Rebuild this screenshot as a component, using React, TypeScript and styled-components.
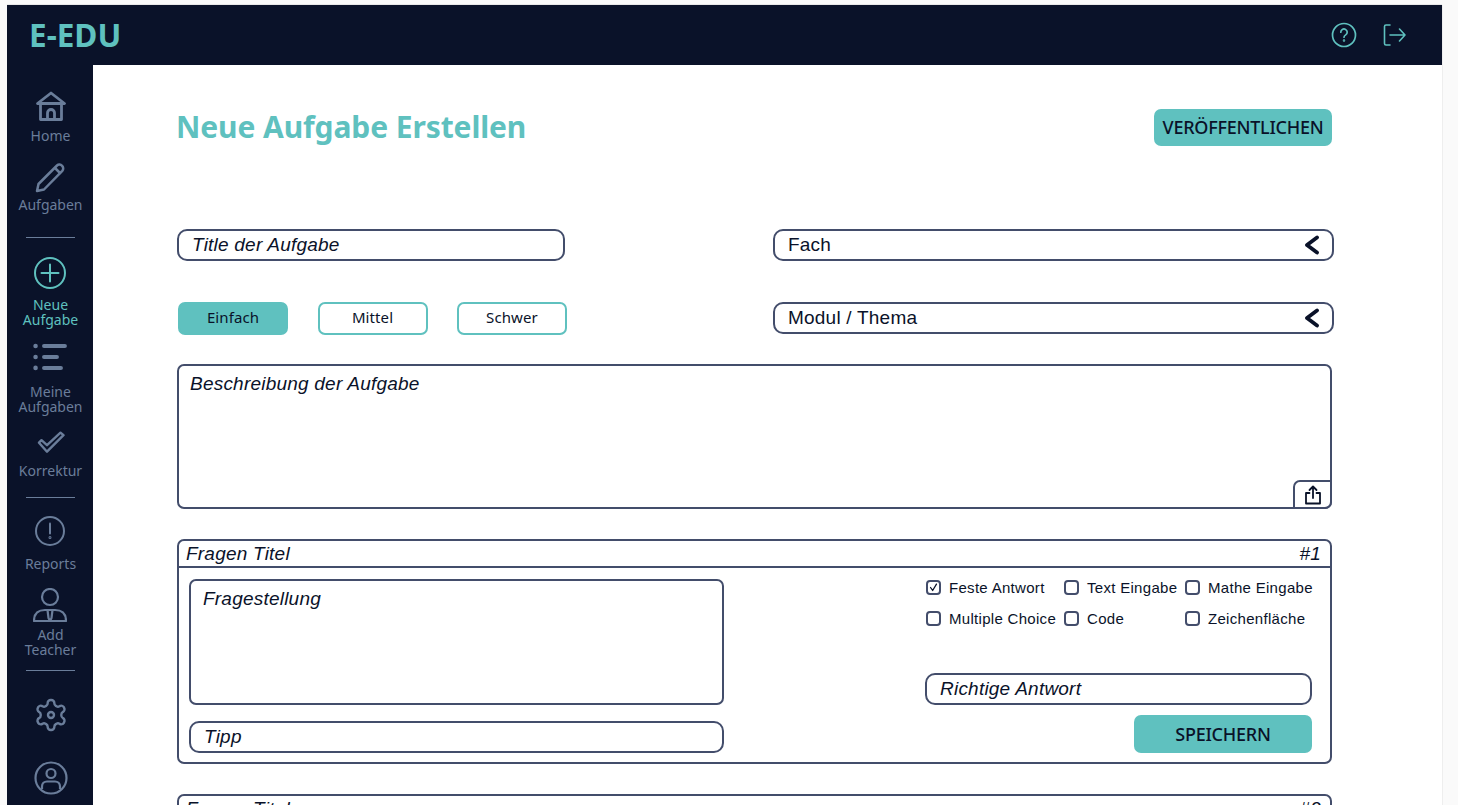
import React from 'react';
import styled, { createGlobalStyle } from 'styled-components';

const NAVY = '#0a1229';
const TEAL = '#5fc1bf';
const MUTED = '#6a7d9a';
const LINE = '#434d6b';

const GlobalStyle = createGlobalStyle`
    html, body {
        margin: 0;
        height: 805px;
        overflow: hidden;
        background: #fafafa;
    }
    body {
        font-family: "Noto Sans", sans-serif;
    }
`;

type IconProps = { size: number; stroke?: string };

const HomeIcon = ({ size, stroke = MUTED }: IconProps) => (
    <svg width={size} height={size} viewBox="0 0 30 30" fill="none" stroke={stroke} strokeWidth="2.8" strokeLinejoin="round" strokeLinecap="round">
        <path d="M1.500 12.500 15 2l13.500 10.500z" />
        <path d="M4.500 13v15.500h21V13" />
        <path d="M11.500 28v-6a3.500 3.500 0 0 1 7 0v6" />
    </svg>
);

const PencilIcon = ({ size, stroke = MUTED }: IconProps) => (
    <svg width={size} height={size} viewBox="0 0 30 30" fill="none" stroke={stroke} strokeWidth="2.5" strokeLinejoin="round" strokeLinecap="round">
        <path d="M2 28l1.500-7L22 2.500a3.500 3.500 0 0 1 5 .3 3.500 3.500 0 0 1 .3 5L9 26.500z" />
        <path d="M20 5l5 5" />
    </svg>
);

const PlusCircleIcon = ({ size, stroke = TEAL }: IconProps) => (
    <svg width={size} height={size} viewBox="0 0 32 32" fill="none" stroke={stroke} strokeWidth="2" strokeLinecap="round">
        <circle cx="16" cy="16" r="15" />
        <path d="M16 7.500v17M7.500 16h17" />
    </svg>
);

const ListIcon = ({ size, stroke = MUTED }: IconProps) => (
    <svg width={size} height={size * 0.82} viewBox="0 0 34 28" fill="none" stroke={stroke} strokeLinecap="round">
        <circle cx="2.500" cy="3" r="2.300" fill={stroke} stroke="none" />
        <circle cx="2.500" cy="14" r="2.300" fill={stroke} stroke="none" />
        <circle cx="2.500" cy="25" r="2.300" fill={stroke} stroke="none" />
        <path d="M11 3h21M11 14h13M11 25h17" strokeWidth="4" />
    </svg>
);

const CheckIcon = ({ size, stroke = MUTED }: IconProps) => (
    <svg width={size} height={size * 0.8} viewBox="0 0 28 22" fill="none" stroke={stroke} strokeWidth="2.400" strokeLinejoin="round">
        <path d="M2 11.500 4.500 9l5.500 5L23.500 1.500 26.500 4 10 20.500z" />
    </svg>
);

const AlertIcon = ({ size, stroke = MUTED }: IconProps) => (
    <svg width={size} height={size} viewBox="0 0 30 30" fill="none" stroke={stroke} strokeWidth="2" strokeLinecap="round">
        <circle cx="15" cy="15" r="14" />
        <path d="M15 7.500v10" />
        <circle cx="15" cy="21.500" r="0.500" />
    </svg>
);

const TeacherIcon = ({ size, stroke = MUTED }: IconProps) => (
    <svg width={size} height={size} viewBox="0 0 34 34" fill="none" stroke={stroke} strokeWidth="2.200" strokeLinejoin="round">
        <circle cx="17" cy="9" r="8" />
        <path d="M1 33c0-7 4-11 11-11h10c7 0 11 4 11 11z" />
        <path d="M14.500 22l1 8 1.500 3 1.500-3 1-8" />
    </svg>
);

const GearIcon = ({ size, stroke = MUTED }: IconProps) => (
    <svg width={size} height={size} viewBox="0 0 24 24" fill="none" stroke={stroke} strokeWidth="1.600" strokeLinejoin="round" strokeLinecap="round">
        <path d="M12.220 2h-.44a2 2 0 0 0-2 2v.18a2 2 0 0 1-1 1.730l-.43.25a2 2 0 0 1-2 0l-.15-.08a2 2 0 0 0-2.730.73l-.22.38a2 2 0 0 0 .73 2.730l.15.1a2 2 0 0 1 1 1.720v.51a2 2 0 0 1-1 1.740l-.15.09a2 2 0 0 0-.73 2.730l.22.38a2 2 0 0 0 2.730.73l.15-.08a2 2 0 0 1 2 0l.43.25a2 2 0 0 1 1 1.730V20a2 2 0 0 0 2 2h.44a2 2 0 0 0 2-2v-.18a2 2 0 0 1 1-1.730l.43-.25a2 2 0 0 1 2 0l.15.08a2 2 0 0 0 2.730-.73l.22-.39a2 2 0 0 0-.73-2.730l-.15-.08a2 2 0 0 1-1-1.740v-.5a2 2 0 0 1 1-1.740l.15-.09a2 2 0 0 0 .73-2.730l-.22-.38a2 2 0 0 0-2.730-.73l-.15.08a2 2 0 0 1-2 0l-.43-.25a2 2 0 0 1-1-1.730V4a2 2 0 0 0-2-2z" />
        <circle cx="12" cy="12" r="2" />
    </svg>
);

const UserCircleIcon = ({ size, stroke = MUTED }: IconProps) => (
    <svg width={size} height={size} viewBox="0 0 34 34" fill="none" stroke={stroke} strokeWidth="2.200">
        <circle cx="17" cy="17" r="15.500" />
        <circle cx="17" cy="12.500" r="4.500" />
        <path d="M8 28v-2.500c0-3 2.200-5 5-5h8c2.800 0 5 2 5 5V28" />
    </svg>
);

const HelpIcon = () => (
    <svg width="26" height="26" viewBox="0 0 26 26" fill="none" stroke={TEAL} strokeWidth="1.700" strokeLinecap="round">
        <circle cx="13" cy="13" r="11.500" />
        <path d="M9.800 10.200a3.200 3.200 0 1 1 4.900 2.700c-1 .6-1.700 1.200-1.700 2.300" />
        <circle cx="13" cy="18.600" r="0.400" />
    </svg>
);

const LogoutIcon = () => (
    <svg width="23" height="24" viewBox="0 0 23 24" fill="none" stroke={TEAL} strokeWidth="1.600" strokeLinecap="round" strokeLinejoin="round">
        <path d="M7 2H3a1.500 1.500 0 0 0-1.500 1.500v17A1.500 1.500 0 0 0 3 22h4" />
        <path d="M7 12h15M16.500 6l5.500 6-5.500 6" />
    </svg>
);

const ChevronIcon = () => (
    <svg width="16" height="20" viewBox="0 0 16 20" fill="none" stroke={NAVY} strokeWidth="3.800" strokeLinecap="round" strokeLinejoin="round">
        <path d="M13 2.500 3 10l10 7.500" />
    </svg>
);

const ShareIcon = () => (
    <svg width="18" height="20" viewBox="0 0 18 20" fill="none" stroke={NAVY} strokeWidth="1.800" strokeLinecap="round" strokeLinejoin="round">
        <path d="M5.500 8H2v10.500h14V8h-3.500" />
        <path d="M9 13V1.500M5.500 5 9 1.500 12.500 5" />
    </svg>
);

const CheckMark = () => (
    <svg width="13" height="13" viewBox="0 0 13 13" fill="none" stroke={NAVY} strokeWidth="1.500" strokeLinecap="round" strokeLinejoin="round">
        <path d="M3 6.500 5.500 10 10 2.500" />
    </svg>
);

const navTop = [
    { icon: <HomeIcon size={30} />, label: ['Home'], mt: 26, gap: 7 },
    { icon: <PencilIcon size={30} />, label: ['Aufgaben'], mt: 20, gap: 4 },
];
const navMid = [
    { icon: <PlusCircleIcon size={32} />, label: ['Neue', 'Aufgabe'], mt: 19, gap: 8, active: true },
    { icon: <ListIcon size={34} />, label: ['Meine', 'Aufgaben'], mt: 16, gap: 13 },
    { icon: <CheckIcon size={28} />, label: ['Korrektur'], mt: 17, gap: 10 },
];
const navLow = [
    { icon: <AlertIcon size={30} />, label: ['Reports'], mt: 18, gap: 10 },
    { icon: <TeacherIcon size={34} />, label: ['Add', 'Teacher'], mt: 17, gap: 5 },
];

const renderNav = (items: typeof navMid) =>
    items.map((item) => (
        <NavItem key={item.label[0]} $mt={item.mt} $gap={item.gap} $active={item.active}>
            {item.icon}
            <NavLabel>
                {item.label.map((line) => (
                    <span key={line}>{line}</span>
                ))}
            </NavLabel>
        </NavItem>
    ));

const QuestionCard = ({ number, checks }: { number: number; checks: { label: string; on?: boolean }[] }) => (
    <Card>
        <CardHeader>
            <span>Fragen Titel</span>
            <span>#{number}</span>
        </CardHeader>
        <CardBody>
            <CardLeft>
                <QuestionBox>Fragestellung</QuestionBox>
                <Field $pad={13}>Tipp</Field>
            </CardLeft>
            <CardRight>
                <CheckGrid>
                    {checks.map((check) => (
                        <CheckItem key={check.label}>
                            <CheckBox>{check.on && <CheckMark />}</CheckBox>
                            {check.label}
                        </CheckItem>
                    ))}
                </CheckGrid>
                <Field $pad={13}>Richtige Antwort</Field>
                <SaveButton>SPEICHERN</SaveButton>
            </CardRight>
        </CardBody>
    </Card>
);

const answerTypes = [
    { label: 'Feste Antwort', on: true },
    { label: 'Text Eingabe' },
    { label: 'Mathe Eingabe' },
    { label: 'Multiple Choice' },
    { label: 'Code' },
    { label: 'Zeichenfläche' },
];

export default function App() {
    return (
        <>
            <GlobalStyle />
            <Shell>
                <Header>
                    <Logo>E-EDU</Logo>
                    <HeaderIcons>
                        <HelpIcon />
                        <LogoutIcon />
                    </HeaderIcons>
                </Header>
                <Body>
                    <Sidebar>
                        {renderNav(navTop)}
                        <NavDivider $mt={25} />
                        {renderNav(navMid)}
                        <NavDivider $mt={19} />
                        {renderNav(navLow)}
                        <NavDivider $mt={13} />
                        <NavIcon $mt={26}><GearIcon size={36} /></NavIcon>
                        <NavIcon $mt={28}><UserCircleIcon size={34} /></NavIcon>
                    </Sidebar>
                    <Main>
                        <TitleRow>
                            <Title>Neue Aufgabe Erstellen</Title>
                            <PublishButton>VERÖFFENTLICHEN</PublishButton>
                        </TitleRow>
                        <FormGrid>
                            <TitleField $pad={13}>Title der Aufgabe</TitleField>
                            <SelectField>
                                Fach
                                <ChevronIcon />
                            </SelectField>
                            <LevelRow>
                                <LevelButton $active>Einfach</LevelButton>
                                <LevelButton>Mittel</LevelButton>
                                <LevelButton>Schwer</LevelButton>
                            </LevelRow>
                            <SelectField>
                                Modul / Thema
                                <ChevronIcon />
                            </SelectField>
                        </FormGrid>
                        <Description>
                            Beschreibung der Aufgabe
                            <UploadTab>
                                <ShareIcon />
                            </UploadTab>
                        </Description>
                        <QuestionCard number={1} checks={answerTypes} />
                        <QuestionCard number={2} checks={answerTypes} />
                    </Main>
                </Body>
            </Shell>
        </>
    );
}

const Shell = styled.div`
    width: 1435px;
    height: 800px;
    margin: 5px 0 0 7px;
    overflow: hidden;
    display: flex;
    flex-direction: column;
    box-shadow: 0 -1px 0 #e8e8e8, 1px 0 0 #eeeeee;
`;

const Header = styled.header`
    flex: none;
    height: 60px;
    display: flex;
    align-items: center;
    justify-content: space-between;
    padding: 0 36px 0 22px;
    background: ${NAVY};
`;

const Logo = styled.div`
    padding-bottom: 2px;
    font-size: 31.500px;
    font-weight: 700;
    color: ${TEAL};
`;

const HeaderIcons = styled.div`
    display: flex;
    align-items: center;
    gap: 26px;
`;

const Body = styled.div`
    flex: 1;
    display: flex;
    min-height: 0;
`;

const Sidebar = styled.nav`
    box-sizing: border-box;
    flex: none;
    width: 86px;
    padding-left: 1px;
    display: flex;
    flex-direction: column;
    align-items: center;
    background: ${NAVY};
`;

const NavItem = styled.div<{ $mt: number; $gap: number; $active?: boolean }>`
    display: flex;
    flex-direction: column;
    align-items: center;
    margin-top: ${({ $mt }) => $mt}px;
    gap: ${({ $gap }) => $gap}px;
    color: ${({ $active }) => ($active ? TEAL : MUTED)};
`;

const NavLabel = styled.div`
    display: flex;
    flex-direction: column;
    align-items: center;
    font-size: 14px;
    line-height: 15px;
`;

const NavDivider = styled.div<{ $mt: number }>`
    flex: none;
    width: 49px;
    height: 1px;
    margin-top: ${({ $mt }) => $mt}px;
    background: ${MUTED};
`;

const NavIcon = styled.div<{ $mt: number }>`
    display: flex;
    margin-top: ${({ $mt }) => $mt}px;
`;

const Main = styled.main`
    flex: 1;
    min-width: 0;
    padding: 44px 110px 0 84px;
    background: #fff;
`;

const TitleRow = styled.div`
    display: flex;
    align-items: center;
    justify-content: space-between;
    height: 37px;
`;

const Title = styled.h1`
    margin: 0 0 2px -1px;
    font-size: 30px;
    font-weight: 700;
    letter-spacing: -0.1px;
    color: ${TEAL};
`;

const TealButton = styled.button`
    border: 0;
    border-radius: 7px;
    background: ${TEAL};
    color: ${NAVY};
    font-family: "Noto Sans", sans-serif;
    font-size: 18px;
    font-weight: 500;
    letter-spacing: -0.25px;
    text-align: center;
    padding: 0;
`;

const PublishButton = styled(TealButton)`
    width: 178px;
    height: 37px;
    padding-bottom: 2px;
`;

const FormGrid = styled.div`
    display: grid;
    grid-template-columns: 596px 561px;
    row-gap: 41px;
    margin-top: 83px;
`;

const Field = styled.div<{ $pad: number }>`
    box-sizing: border-box;
    height: 32px;
    display: flex;
    align-items: center;
    padding-left: ${({ $pad }) => $pad}px;
    border: 2px solid ${LINE};
    border-radius: 10px;
    color: ${NAVY};
    font-family: "Liberation Sans", sans-serif;
    font-size: 19px;
    font-style: italic;
    letter-spacing: 0.22px;
`;

const TitleField = styled(Field)`
    width: 388px;
`;

const SelectField = styled(Field).attrs({ $pad: 13 })`
    justify-content: space-between;
    padding-right: 12px;
    font-style: normal;
`;

const LevelRow = styled.div`
    display: flex;
    gap: 29.500px;
    padding-left: 1px;
`;

const LevelButton = styled.button<{ $active?: boolean }>`
    box-sizing: border-box;
    width: 110px;
    height: 33px;
    padding: 0 0 3px;
    border: 2px solid ${TEAL};
    border-radius: 7px;
    background: ${({ $active }) => ($active ? TEAL : '#fff')};
    color: ${NAVY};
    font-family: "Noto Sans", sans-serif;
    font-size: 15px;
    letter-spacing: 0.1px;
`;

const Description = styled.div`
    position: relative;
    box-sizing: border-box;
    height: 145px;
    margin-top: 29px;
    padding: 7px 11px;
    border: 2px solid ${LINE};
    border-radius: 7px;
    color: ${NAVY};
    font-family: "Liberation Sans", sans-serif;
    font-size: 19px;
    font-style: italic;
    letter-spacing: 0.22px;
`;

const UploadTab = styled.div`
    position: absolute;
    right: -2px;
    bottom: -2px;
    box-sizing: border-box;
    width: 39px;
    height: 29px;
    display: flex;
    align-items: center;
    justify-content: center;
    border: 2px solid ${LINE};
    border-radius: 7px 0 7px 0;
    background: #fff;
`;

const Card = styled.section`
    box-sizing: border-box;
    height: 225px;
    margin-top: 30px;
    border: 2px solid ${LINE};
    border-radius: 7px;
    display: flex;
    flex-direction: column;
`;

const CardHeader = styled.div`
    box-sizing: border-box;
    flex: none;
    height: 27px;
    display: flex;
    align-items: center;
    justify-content: space-between;
    padding: 0 9px 0 7px;
    border-bottom: 2px solid ${LINE};
    color: ${NAVY};
    font-family: "Liberation Sans", sans-serif;
    font-size: 19px;
    font-style: italic;
    letter-spacing: 0.22px;
`;

const CardBody = styled.div`
    flex: 1;
    display: flex;
    justify-content: space-between;
    padding: 11px 18px 8px 10px;
`;

const CardLeft = styled.div`
    width: 535px;
    display: flex;
    flex-direction: column;
    gap: 16px;
`;

const QuestionBox = styled.div`
    box-sizing: border-box;
    height: 126px;
    padding: 7px 12px;
    border: 2px solid ${LINE};
    border-radius: 7px;
    color: ${NAVY};
    font-family: "Liberation Sans", sans-serif;
    font-size: 19px;
    font-style: italic;
    letter-spacing: 0.22px;
`;

const CardRight = styled.div`
    width: 387px;
    display: flex;
    flex-direction: column;
    align-items: stretch;
`;

const CheckGrid = styled.div`
    box-sizing: border-box;
    display: grid;
    grid-template-columns: 138px 121px 1fr;
    grid-auto-rows: 16px;
    row-gap: 15px;
    height: 94px;
    padding-left: 1px;
`;

const CheckItem = styled.label`
    display: flex;
    align-items: center;
    gap: 8px;
    color: ${NAVY};
    font-family: "Liberation Sans", sans-serif;
    font-size: 15px;
    letter-spacing: 0.3px;
    white-space: nowrap;
`;

const CheckBox = styled.span`
    box-sizing: border-box;
    flex: none;
    width: 15px;
    height: 15px;
    display: flex;
    align-items: center;
    justify-content: center;
    border: 2px solid ${LINE};
    border-radius: 4px;
`;

const SaveButton = styled(TealButton)`
    align-self: flex-end;
    width: 178px;
    height: 38px;
    margin-top: 10px;
`;
